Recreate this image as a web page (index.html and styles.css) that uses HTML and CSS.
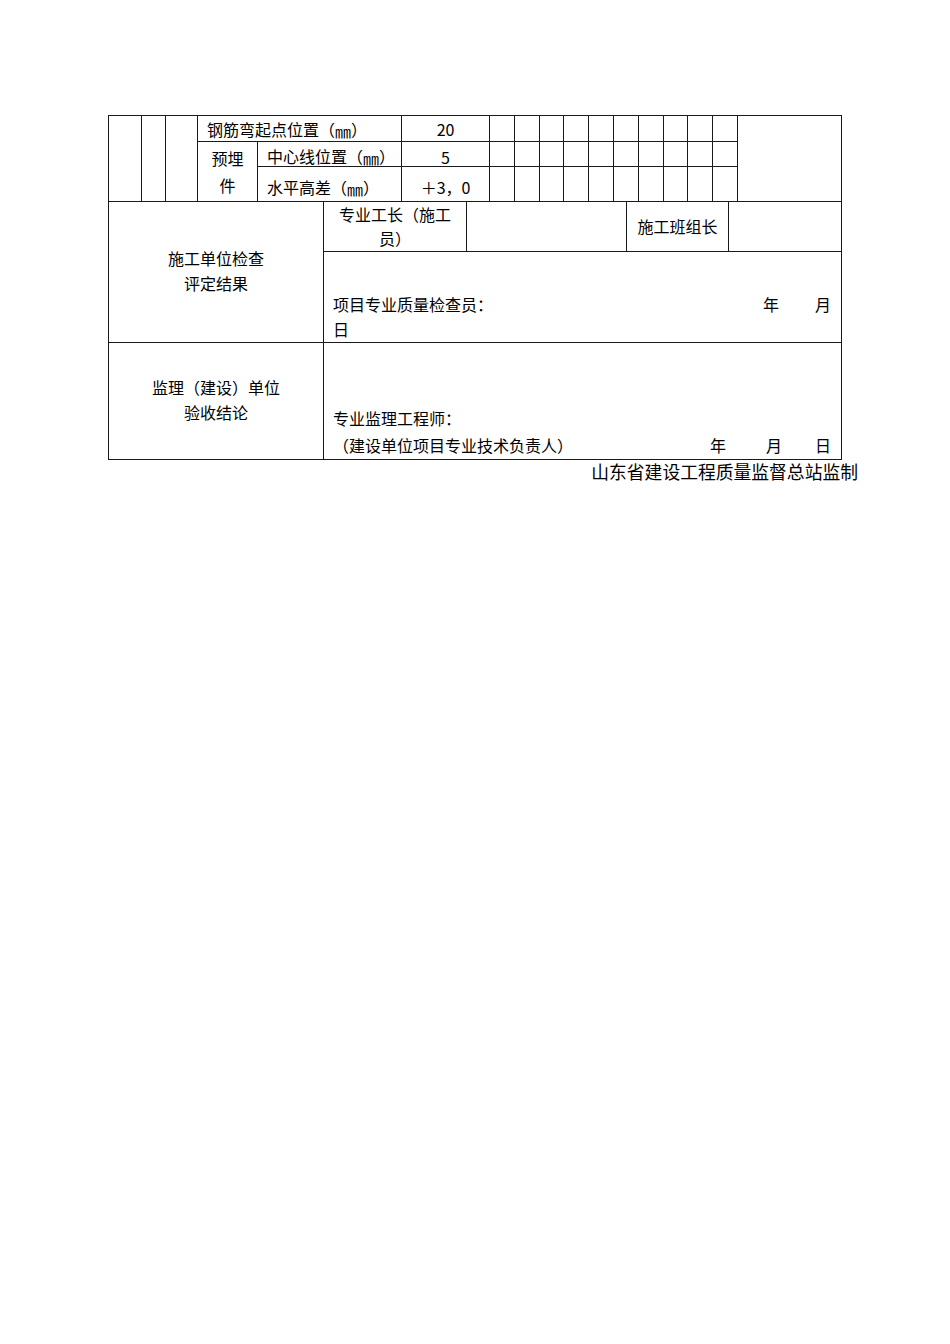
FILE: index.html
```html
<!DOCTYPE html>
<html lang="zh-CN">
<head>
<meta charset="utf-8">
<title>检验批质量验收记录</title>
<link rel="stylesheet" href="styles.css">
</head>
<body>
<div class="page">
  <table class="grid top">
    <colgroup>
      <col class="c33"><col class="c24"><col class="c32"><col class="c60"><col class="c144"><col class="c88">
      <col class="c25"><col class="c25"><col class="c25"><col class="c25"><col class="c25">
      <col class="c25"><col class="c25"><col class="c25"><col class="c25"><col class="c25">
      <col class="c104">
    </colgroup>
    <tr class="r1">
      <td rowspan="3"></td><td rowspan="3"></td><td rowspan="3"></td>
      <td colspan="2" class="left">钢筋弯起点位置（<span class="mm">㎜</span>）</td>
      <td class="center">20</td>
      <td></td><td></td><td></td><td></td><td></td><td></td><td></td><td></td><td></td><td></td>
      <td rowspan="3"></td>
    </tr>
    <tr class="r2">
      <td rowspan="2" class="center tall">预埋<br>件</td>
      <td class="left low">中心线位置（<span class="mm">㎜</span>）</td>
      <td class="center low">5</td>
      <td></td><td></td><td></td><td></td><td></td><td></td><td></td><td></td><td></td><td></td>
    </tr>
    <tr class="r3">
      <td class="left low2">水平高差（<span class="mm">㎜</span>）</td>
      <td class="center low2">＋3，0</td>
      <td></td><td></td><td></td><td></td><td></td><td></td><td></td><td></td><td></td><td></td>
    </tr>
  </table>
  <table class="grid bottom">
    <colgroup>
      <col class="w215"><col class="w143"><col class="w160"><col class="w102"><col class="w113">
    </colgroup>
    <tr class="ra">
      <td rowspan="2" class="center label big">施工单位检查<br>评定结果</td>
      <td class="center label">专业工长（施工<br>员）</td>
      <td></td>
      <td class="center label">施工班组长</td>
      <td></td>
    </tr>
    <tr class="rb">
      <td colspan="4" class="sign">
        <div class="signline"><span>项目专业质量检查员：</span><span class="yr">年</span><span class="mo">月</span></div>
        <div class="signline"><span>日</span></div>
      </td>
    </tr>
    <tr class="rc">
      <td class="center label big">监理（建设）单位<br>验收结论</td>
      <td colspan="4" class="sign sign2">
        <div class="signline"><span>专业监理工程师：</span></div>
        <div class="signline"><span>（建设单位项目专业技术负责人）</span><span class="yr2">年</span><span class="mo2">月</span><span class="dy2">日</span></div>
      </td>
    </tr>
  </table>
  <div class="footer">山东省建设工程质量监督总站监制</div>
</div>
</body>
</html>
```

FILE: styles.css
```css
html, body {
  margin: 0;
  padding: 0;
  background: #fff;
}
body {
  font-family: "Noto Sans CJK SC", "Noto Sans", sans-serif;
  font-size: 16px;
  color: #000;
}
.page {
  padding: 115px 0 0 108px;
  width: 733px;
}
.grid {
  border-collapse: collapse;
  table-layout: fixed;
  width: 733px;
}
.grid td {
  border: 1px solid #1a1a1a;
  padding: 0;
  line-height: 20px;
  vertical-align: middle;
  white-space: nowrap;
}
.mm {
  display: inline-block;
  height: 16px;
  line-height: 16px;
  vertical-align: -2px;
}
.c33 { width: 33px; }
.c24 { width: 24px; }
.c32 { width: 32px; }
.c60 { width: 60px; }
.c144 { width: 144px; }
.c88 { width: 88px; }
.c25 { width: 24.8px; }
.c104 { width: 104px; }
.r1 { height: 26px; }
.r2 { height: 25px; }
.r3 { height: 35px; }
.grid td.left { text-align: left; padding-left: 9px; }
.center { text-align: center; }
.grid td.tall { line-height: 27px; padding-top: 1px; }
.grid td.low { padding-top: 5px; line-height: 18px; }
.grid td.low2 { padding-top: 6px; }

.bottom { margin-top: -1px; }
.w215 { width: 215px; }
.w143 { width: 143px; }
.w160 { width: 160px; }
.w102 { width: 102px; }
.w113 { width: 113px; }
.ra { height: 50px; }
.rb { height: 91px; }
.rc { height: 117px; }
.grid td.label { line-height: 24px; padding-bottom: 1px; }
.grid td.big { padding-bottom: 3px; line-height: 24.5px; }
.grid td.sign {
  vertical-align: bottom;
  padding: 0 10px 0 9px;
  line-height: 25px;
}
.grid td.sign2 { line-height: 27px; }
.signline {
  display: flex;
  align-items: baseline;
}
.yr { margin-left: auto; }
.mo { margin-left: 36px; }
.yr2 { margin-left: auto; }
.mo2 { margin-left: 40px; }
.dy2 { margin-left: 33px; }
.footer {
  text-align: right;
  margin-right: -17px;
  font-size: 17.8px;
  line-height: 24px;
  margin-top: -1px;
}
```
